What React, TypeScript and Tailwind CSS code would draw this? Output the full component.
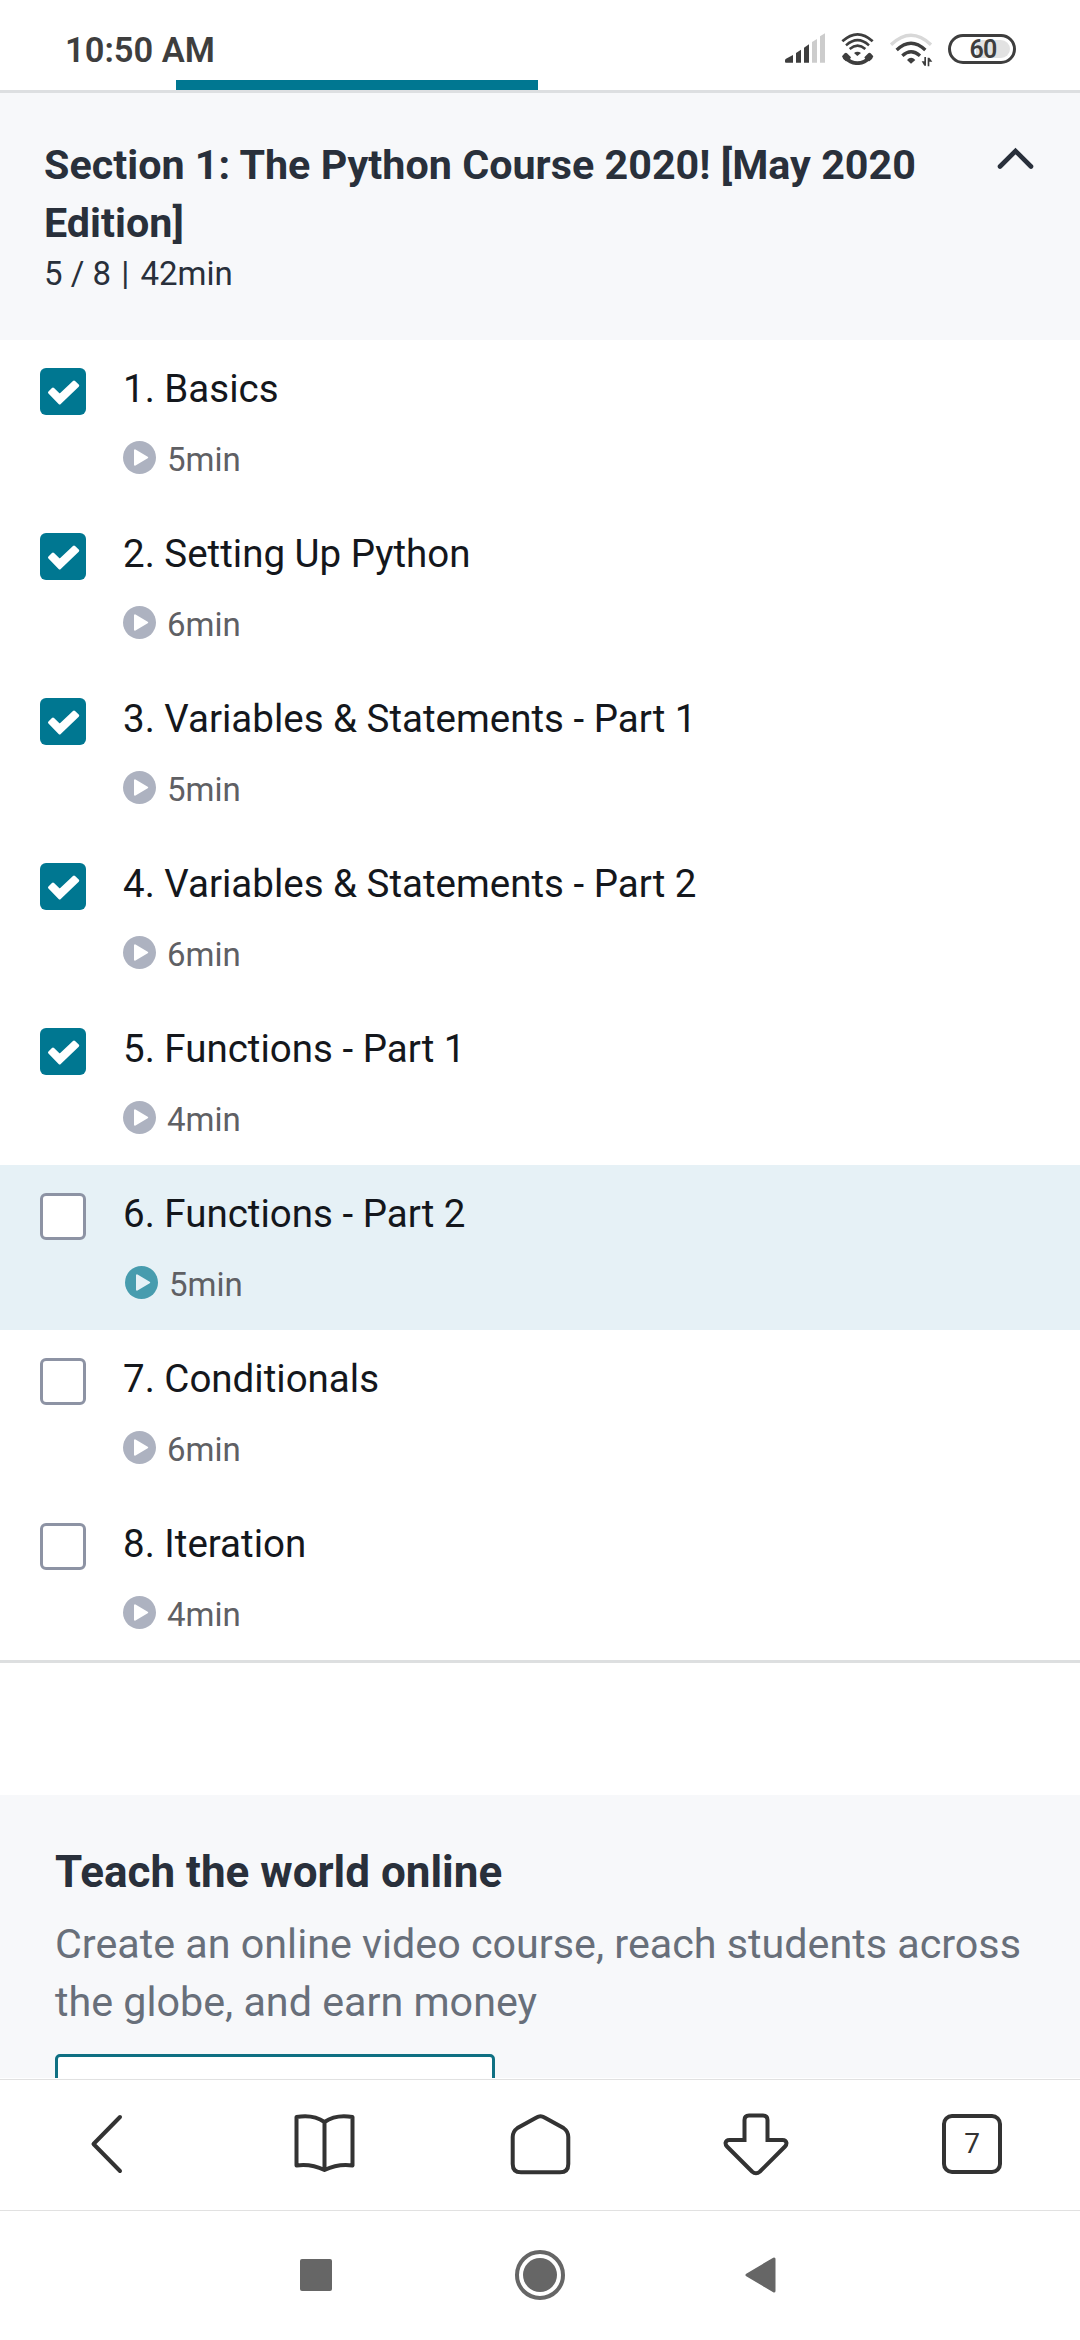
type Lecture = { title: string; time: string; done?: boolean; current?: boolean };

const lectures: Lecture[] = [
  { title: "1. Basics", time: "5min", done: true },
  { title: "2. Setting Up Python", time: "6min", done: true },
  { title: "3. Variables & Statements - Part 1", time: "5min", done: true },
  { title: "4. Variables & Statements - Part 2", time: "6min", done: true },
  { title: "5. Functions - Part 1", time: "4min", done: true },
  { title: "6. Functions - Part 2", time: "5min", current: true },
  { title: "7. Conditionals", time: "6min" },
  { title: "8. Iteration", time: "4min" },
];

function SignalIcon() {
  return (
    <svg className="h-[30px] w-[40px]" viewBox="75 70 120 90">
      <g fill="#3e3e3e">
        <path d="M78 159q-3 0-3-3v-4q0-3 3-5l21-11v23z" />
        <path d="M108 159v-29l15-10v39z" />
        <path d="M132 159v-45l15-10v55z" />
      </g>
      <g fill="#cccccc">
        <path d="M156 159V97l15-9v71z" />
        <path d="M180 159V80l15-9v88z" />
      </g>
    </svg>
  );
}

function WifiCallIcon() {
  return (
    <svg className="h-[33px] w-[34px]" viewBox="243 66 102 99" fill="none" stroke="#3e3e3e">
      <path d="M247 94q46-42 91 0" strokeWidth="8" />
      <path d="M258 106q35-31 69 0" strokeWidth="7.5" />
      <path d="M269 117q24-20 47 0" strokeWidth="7.5" />
      <path d="M292 138l-10-9q10-8 21 0z" fill="#3e3e3e" stroke="none" />
      <path d="M254 142q38 35 77 0" strokeWidth="11" />
      <path
        d="M246 139l8-9q4-3 7 0l12 12q-4 10-15 12q-9-4-12-15zM340 139l-8-9q-4-3-7 0l-12 12q4 10 15 12q9-4 12-15z"
        fill="#3e3e3e"
        stroke="none"
      />
    </svg>
  );
}

function WifiIcon() {
  return (
    <svg className="h-[34px] w-[43px]" viewBox="390 70 129 102" fill="none">
      <path d="M393 105q60-57 120 0" stroke="#d8d8d8" strokeWidth="10" />
      <path d="M410 121q43-41 86 0" stroke="#3e3e3e" strokeWidth="10" />
      <path d="M427 138q26-24 53 0" stroke="#3e3e3e" strokeWidth="10" />
      <path d="M453 162l-12-11q12-13 25 0z" fill="#3e3e3e" />
      <path d="M493 168v-26h5v26zM485 155h8v13zM503 144h5v26h-5zM508 144l9 12h-9z" fill="#3e3e3e" />
    </svg>
  );
}

function PlayIcon({ current }: { current?: boolean }) {
  return (
    <svg className="size-[33px]" viewBox="0 0 33 33">
      <circle cx="16.5" cy="16.5" r="16.5" fill={current ? "#479cae" : "#adb2c0"} />
      <path
        d="M12 9.3v14.4l12.2-7.2z"
        fill={current ? "#e6f1f6" : "#fff"}
        stroke={current ? "#e6f1f6" : "#fff"}
        strokeWidth="2"
        strokeLinejoin="round"
      />
    </svg>
  );
}

function Checkbox({ done }: { done?: boolean }) {
  if (!done) return <div className="h-[47px] w-[46px] rounded-[6px] border-[3px] border-[#8d93a4] bg-white" />;
  return (
    <div className="h-[47px] w-[46px] rounded-[6px] bg-[#007791]">
      <svg className="h-[47px] w-[46px]" viewBox="0 0 46 47">
        <path
          d="M9.5 24.5l3.500-3.500l6.700 6.600l14.300-13.600l3.700 3.600l-18 17.400z"
          fill="#fff"
          stroke="#fff"
          strokeWidth="3"
          strokeLinejoin="round"
        />
      </svg>
    </div>
  );
}

function LectureRow({ title, time, done, current }: Lecture) {
  return (
    <li className={`flex h-[165px] pl-10 ${current ? "bg-[#e6f1f6]" : "bg-white"}`}>
      <div className="pt-[28px]">
        <Checkbox done={done} />
      </div>
      <div className="ml-[37px] pt-[22px]">
        <div className="text-[38.5px] leading-[54px] text-[#14171c]">{title}</div>
        <div className={`mt-[20px] flex ${current ? "ml-[2px]" : ""}`}>
          <div className="pt-[5px]">
            <PlayIcon current={current} />
          </div>
          <span className="ml-[11px] text-[33px] leading-[47px] text-[#5f6064]">{time}</span>
        </div>
      </div>
    </li>
  );
}

export default function App() {
  return (
    <div className="flex h-[2340px] w-[1080px] flex-col overflow-hidden bg-white font-['Roboto',sans-serif]">
      <header className="flex h-20 shrink-0 items-start pl-[65px]">
        <div className="mt-[30px] w-[720px] text-[34.5px] leading-[40px] font-semibold text-[#3e3e3e]">10:50 AM</div>
        <div className="mt-[33px]">
          <SignalIcon />
        </div>
        <div className="mt-[32px] ml-[16px]">
          <WifiCallIcon />
        </div>
        <div className="mt-[33px] ml-[15px]">
          <WifiIcon />
        </div>
        <div className="mt-[34px] ml-[15px] flex h-[30px] w-[68px] rounded-full border-[3px] border-[#3e3e3e] p-[3px]">
          <div className="flex h-full w-full items-center justify-center rounded-full bg-[linear-gradient(90deg,#fff_40%,#e2e2e2_40%)] pl-[2px] text-[25px] leading-none font-semibold tracking-[-0.8px] text-[#3e3e3e]">
            60
          </div>
        </div>
      </header>

      <div className="h-[10px] shrink-0 pl-44">
        <div className="h-full w-[362px] bg-[#007791]" />
      </div>

      <section className="flex h-[250px] shrink-0 border-t-[3px] border-[#dddfe1] bg-[#f7f8fa] pt-[44px] pl-[44px] text-[#29303b]">
        <div className="w-[900px]">
          <h2 className="text-[41.25px] leading-[57.75px] font-bold tracking-[0.02px]">
            Section 1: The Python Course 2020! [May 2020 Edition]
          </h2>
          <p className="-mt-[2px] text-[33px] leading-[46px]">
            5 / 8 <span className="mr-[3px] ml-[2px]">|</span> 42min
          </p>
        </div>
        <svg className="mt-[9px] ml-[53px] h-[26px] w-[38px]" viewBox="0 0 38 26" fill="none">
          <path d="M3 20.500L18.500 5L34 20.500" stroke="#29303b" strokeWidth="4.6" strokeLinecap="round" />
        </svg>
      </section>

      <ul className="shrink-0 border-b-[3px] border-[#dddfe0]">
        {lectures.map((l) => (
          <LectureRow key={l.title} {...l} />
        ))}
      </ul>

      <section className="mt-[132px] h-[283px] shrink-0 overflow-hidden bg-[#f7f8fa] pt-[47px] pl-[55px]">
        <h3 className="text-[44px] leading-[61.6px] font-bold text-[#29303b]">Teach the world online</h3>
        <p className="mt-[11px] w-[990px] text-[41.25px] leading-[58px] text-[#686f7a]">
          Create an online video course, reach students across the globe, and earn money
        </p>
        <div className="mt-[23.4px] h-[110px] w-[440px] rounded-[5px] border-[3px] border-[#0f7083] bg-white" />
      </section>

      <nav className="mt-px grid h-[131px] shrink-0 grid-cols-5 items-center justify-items-center border-t border-[#e1e1e1] pb-[2px] text-[#333]">
        <svg className="size-[72px]" viewBox="72 2108 72 72" fill="none" stroke="currentColor" strokeWidth="4" strokeLinecap="round" strokeLinejoin="round">
          <path d="M120 2117L93.500 2144L120 2171" />
        </svg>
        <svg className="size-[72px]" viewBox="288 2108 72 72" fill="none" stroke="currentColor" strokeWidth="4" strokeLinejoin="round">
          <path d="M324.500 2122Q313 2114 296.500 2117V2165.500Q311 2163.500 324.500 2170Q338 2163.500 352.500 2165.500V2117Q336 2114 324.500 2122V2170" />
        </svg>
        <svg className="size-[72px]" viewBox="504 2108 72 72" fill="none" stroke="currentColor" strokeWidth="4">
          <path d="M536.500 2117.500Q540.500 2115 544.500 2117.500L563.500 2128Q568.300 2131.500 568.300 2137V2164Q568.300 2172.300 560 2172.300H521Q512.700 2172.300 512.700 2164V2137Q512.700 2131.500 517.500 2128Z" />
        </svg>
        <svg className="size-[72px]" viewBox="720 2108 72 72" fill="none" stroke="currentColor" strokeWidth="4">
          <path d="M744.500 2140V2120Q744.500 2115.500 749 2115.500H763Q767.500 2115.500 767.500 2120V2140H782.500Q786 2140 786.500 2143Q786.500 2145 785 2146.500L760 2171.500Q756 2175 752 2171.500L727 2146.500Q725.500 2145 725.500 2143Q726 2140 729.500 2140Z" />
        </svg>
        <div className="flex size-[60px] items-center justify-center rounded-[10px] border-4 border-current text-[28px] leading-none font-normal">
          <span className="-mt-px text-[#333]">7</span>
        </div>
      </nav>

      <footer className="flex h-[130px] shrink-0 items-center border-t border-[#e1e1e1] pb-px pl-[300px]">
        <div className="size-8 rounded-[2px] bg-[#666]" />
        <div className="ml-[183px] flex size-[50px] items-center justify-center rounded-full border-4 border-[#666]">
          <div className="size-[34px] rounded-full bg-[#666]" />
        </div>
        <svg className="ml-[179px] h-[38px] w-[33px]" viewBox="0 0 33 38">
          <path d="M30 3v32L3 19z" fill="#666" stroke="#666" strokeWidth="3" strokeLinejoin="round" />
        </svg>
      </footer>
    </div>
  );
}
